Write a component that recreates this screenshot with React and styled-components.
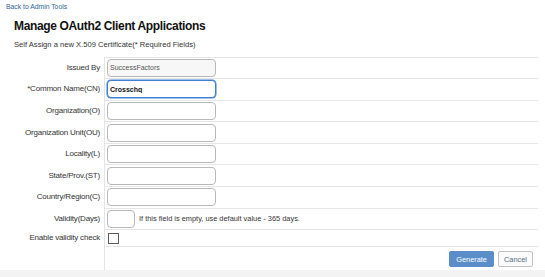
import React from 'react';
import styled, { createGlobalStyle } from 'styled-components';

const GlobalStyle = createGlobalStyle`
  html, body {
    margin: 0;
    padding: 0;
    background: #f3f3f3;
    font-family: "Liberation Sans", Arial, sans-serif;
    color: #333;
  }
`;

const Page = styled.div`
  background: #fff;
  height: 270px;
  display: flex;
  flex-direction: column;
`;

const BackLink = styled.a`
  display: block;
  padding: 3px 0 0 6px;
  font-size: 6.8px;
  line-height: 8px;
  color: #2f6496;
  text-decoration: none;
`;

const Title = styled.h1`
  margin: 8px 0 0;
  padding-left: 14px;
  font-size: 12px;
  line-height: 14px;
  letter-spacing: -0.35px;
  font-weight: bold;
  color: #111;
`;

const Subtitle = styled.p`
  margin: 7px 0 0;
  padding-left: 14px;
  font-size: 7.6px;
  line-height: 10px;
  color: #333;
`;

const Form = styled.div`
  margin-top: 6.5px;
  width: 538px;
`;

const Row = styled.div`
  display: grid;
  grid-template-columns: 104px 1fr;
`;

const Label = styled.label`
  align-self: center;
  text-align: right;
  padding-right: 4px;
  font-size: 8px;
  letter-spacing: -0.2px;
  color: #333;
  white-space: nowrap;
`;

const Cell = styled.div`
  display: flex;
  align-items: center;
  gap: 4px;
  border-left: 1px solid #e4e4e4;
  border-top: 1px solid #e6e6e6;
  border-bottom: ${p => (p.$last ? '1px solid #e6e6e6' : 'none')};
  padding: ${p => p.$pad || '1.3px'} ${p => (p.$right ? '5px' : '0')} ${p => p.$pad || '1.3px'} 2px;
  justify-content: ${p => (p.$right ? 'flex-end' : 'flex-start')};
`;

const Input = styled.input`
  box-sizing: border-box;
  width: ${p => p.$w || '109px'};
  height: 18px;
  margin: 0;
  padding: 0 2px;
  border: 1px solid ${p => (p.$focus ? '#3f7fcf' : '#b8b8b8')};
  box-shadow: ${p => (p.$focus ? '0 0 0 0.5px #3f7fcf' : 'none')};
  border-radius: 4px;
  background: ${p => (p.$readOnly ? '#f7f7f7' : '#fff')};
  font-family: inherit;
  font-size: 7px;
  font-weight: ${p => (p.$bold ? 'bold' : 'normal')};
  color: ${p => (p.$readOnly ? '#555' : '#111')};
  outline: none;
`;

const Hint = styled.span`
  font-size: 7.4px;
  color: #333;
`;

const Check = styled.span`
  display: inline-block;
  box-sizing: border-box;
  width: 11px;
  height: 11px;
  margin-left: 1px;
  border: 1.3px solid #5a5a5a;
  background: #fff;
`;

const Button = styled.button`
  box-sizing: border-box;
  height: ${p => (p.$primary ? '15.5px' : '16.5px')};
  padding: 0 ${p => (p.$primary ? '6px' : '5px')};
  border: 1px solid ${p => (p.$primary ? '#5b8ec9' : '#c2c2c2')};
  border-radius: 2px;
  background: ${p => (p.$primary ? '#5b8ec9' : '#fbfbfb')};
  color: ${p => (p.$primary ? '#fff' : '#566b80')};
  font-family: inherit;
  font-size: 7.4px;
  cursor: pointer;
`;

const fields = [
  { label: 'Issued By', value: 'SuccessFactors', readOnly: true },
  { label: '*Common Name(CN)', value: 'Crosschq', focus: true, bold: true },
  { label: 'Organization(O)' },
  { label: 'Organization Unit(OU)' },
  { label: 'Locality(L)' },
  { label: 'State/Prov.(ST)' },
  { label: 'Country/Region(C)' },
];

export default function App() {
  return (
    <>
      <GlobalStyle />
      <Page>
        <BackLink href="#">Back to Admin Tools</BackLink>
        <Title>Manage OAuth2 Client Applications</Title>
        <Subtitle>Self Assign a new X.509 Certificate(* Required Fields)</Subtitle>
        <Form>
          {fields.map(f => (
            <Row key={f.label}>
              <Label>{f.label}</Label>
              <Cell>
                <Input
                  defaultValue={f.value || ''}
                  readOnly={f.readOnly}
                  $readOnly={f.readOnly}
                  $focus={f.focus}
                  $bold={f.bold}
                />
              </Cell>
            </Row>
          ))}
          <Row>
            <Label>Validity(Days)</Label>
            <Cell>
              <Input $w="28px" />
              <Hint>If this field is empty, use default value - 365 days.</Hint>
            </Cell>
          </Row>
          <Row>
            <Label>Enable validity check</Label>
            <Cell $pad="2.5px">
              <Check />
            </Cell>
          </Row>
          <Row>
            <div />
            <Cell $right $last $pad="3.5px">
              <Button $primary>Generate</Button>
              <Button>Cancel</Button>
            </Cell>
          </Row>
        </Form>
      </Page>
    </>
  );
}
